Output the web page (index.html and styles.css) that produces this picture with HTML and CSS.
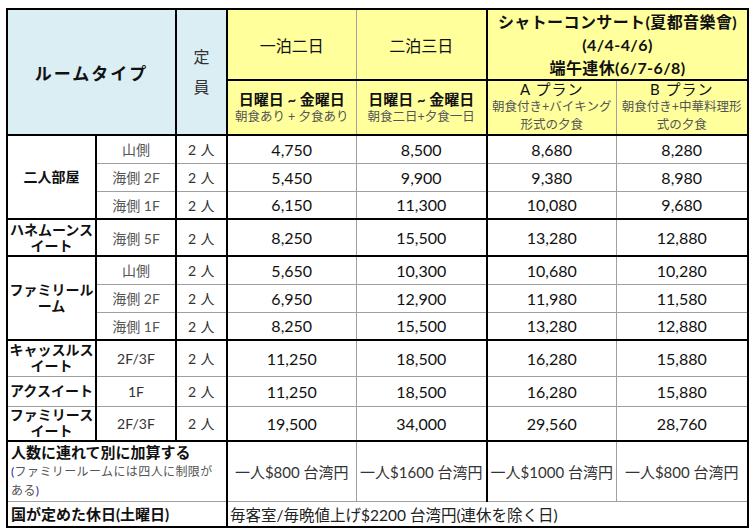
FILE: index.html
```html
<!DOCTYPE html>
<html lang="ja">
<head>
<meta charset="utf-8">
<title>Room rates</title>
<link rel="stylesheet" href="styles.css">
</head>
<body>
<div class="wrap">
<table class="rates">
  <colgroup>
    <col class="c1"><col class="c2"><col class="c3"><col class="c4"><col class="c5"><col class="c6"><col class="c7">
  </colgroup>
  <thead>
    <tr class="hr1">
      <th class="blue rt" rowspan="2" colspan="2">ルームタイプ</th>
      <th class="blue cap" rowspan="2">定<br>員</th>
      <th class="yel stay">一泊二日</th>
      <th class="yel stay">二泊三日</th>
      <th class="yel chateau" colspan="2">
        <div>シャトーコンサート(夏都音樂會)</div>
        <div>(4/4-4/6)</div>
        <div>端午連休(6/7-6/8)</div>
      </th>
    </tr>
    <tr class="hr2">
      <th class="yel sub-h">
        <div class="days">日曜日 ~ 金曜日</div>
        <div class="meal">朝食あり + 夕食あり</div>
      </th>
      <th class="yel sub-h">
        <div class="days">日曜日 ~ 金曜日</div>
        <div class="meal">朝食二日+夕食一日</div>
      </th>
      <th class="yel plan">
        <div class="pname">A プラン</div>
        <div class="pdesc">朝食付き+バイキング<br>形式の夕食</div>
      </th>
      <th class="yel plan">
        <div class="pname">B プラン</div>
        <div class="pdesc">朝食付き+中華料理形<br>式の夕食</div>
      </th>
    </tr>
  </thead>
  <tbody>
    <tr class="r28 g">
      <td class="name" rowspan="3">二人部屋</td>
      <td class="sub">山側</td><td class="pp">2 人</td>
      <td class="num">4,750</td><td class="num">8,500</td><td class="num">8,680</td><td class="num">8,280</td>
    </tr>
    <tr class="r28">
      <td class="sub">海側 2F</td><td class="pp">2 人</td>
      <td class="num">5,450</td><td class="num">9,900</td><td class="num">9,380</td><td class="num">8,980</td>
    </tr>
    <tr class="r28">
      <td class="sub">海側 1F</td><td class="pp">2 人</td>
      <td class="num">6,150</td><td class="num">11,300</td><td class="num">10,080</td><td class="num">9,680</td>
    </tr>
    <tr class="r37 g">
      <td class="name">ハネムーンス<br>イート</td>
      <td class="sub">海側 5F</td><td class="pp">2 人</td>
      <td class="num">8,250</td><td class="num">15,500</td><td class="num">13,280</td><td class="num">12,880</td>
    </tr>
    <tr class="r28 g">
      <td class="name" rowspan="3">ファミリール<br>ーム</td>
      <td class="sub">山側</td><td class="pp">2 人</td>
      <td class="num">5,650</td><td class="num">10,300</td><td class="num">10,680</td><td class="num">10,280</td>
    </tr>
    <tr class="r28">
      <td class="sub">海側 2F</td><td class="pp">2 人</td>
      <td class="num">6,950</td><td class="num">12,900</td><td class="num">11,980</td><td class="num">11,580</td>
    </tr>
    <tr class="r28">
      <td class="sub">海側 1F</td><td class="pp">2 人</td>
      <td class="num">8,250</td><td class="num">15,500</td><td class="num">13,280</td><td class="num">12,880</td>
    </tr>
    <tr class="r36 g">
      <td class="name">キャッスルス<br>イート</td>
      <td class="sub dark">2F/3F</td><td class="pp">2 人</td>
      <td class="num">11,250</td><td class="num">18,500</td><td class="num">16,280</td><td class="num">15,880</td>
    </tr>
    <tr class="r30 g1">
      <td class="name">アクスイート</td>
      <td class="sub dark">1F</td><td class="pp">2 人</td>
      <td class="num">11,250</td><td class="num">18,500</td><td class="num">16,280</td><td class="num">15,880</td>
    </tr>
    <tr class="r35 g1">
      <td class="name">ファミリース<br>イート</td>
      <td class="sub dark">2F/3F</td><td class="pp">2 人</td>
      <td class="num">19,500</td><td class="num">34,000</td><td class="num">29,560</td><td class="num">28,760</td>
    </tr>
    <tr class="r60 g">
      <td class="label" colspan="3">
        <div class="ltitle">人数に連れて別に加算する</div>
        <div class="lnote"><span class="paren">(</span>ファミリールームには四人に制限が<br>ある<span class="paren">)</span></div>
      </td>
      <td class="extra">一人$800 台湾円</td>
      <td class="extra">一人$1600 台湾円</td>
      <td class="extra">一人$1000 台湾円</td>
      <td class="extra">一人$800 台湾円</td>
    </tr>
    <tr class="r26 g1">
      <td class="label hol" colspan="3">国が定めた休日(土曜日)</td>
      <td class="holv" colspan="4">毎客室/毎晩値上げ$2200 台湾円(連休を除く日)</td>
    </tr>
  </tbody>
</table>
</div>
</body>
</html>
```

FILE: styles.css
```css
html, body {
  margin: 0;
  padding: 0;
  background: #ffffff;
}

body {
  font-family: "Lato", "Noto Sans CJK JP", sans-serif;
  color: #151515;
}

.wrap {
  padding: 8px 0 0 6px;
}

.rates {
  border-collapse: collapse;
  table-layout: fixed;
  width: 743px;
  border: 2px solid #000;
}

.rates th,
.rates td {
  border: 1px solid #a0a0a0;
  padding: 0;
  text-align: center;
  vertical-align: middle;
  white-space: nowrap;
  overflow: visible;
}

.c1 { width: 89px; border-right: 2px solid #000; }
.c2 { width: 80px; border-right: 2px solid #000; }
.c3 { width: 51px; border-right: 2px solid #000; }
.c4 { width: 129px; }
.c5 { width: 131px; border-right: 2px solid #000; }
.c6 { width: 129px; }
.c7 { width: 132px; }

/* header */
.hr1 { height: 70px; }
.hr2 { height: 53px; }

.rates thead th {
  border-bottom: 2px solid #000;
  font-weight: normal;
}

.blue { background: #dbeef4; }
.yel { background: #ffff9c; }

.rt {
  font-size: 17px;
  font-weight: bold !important;
  letter-spacing: 2px;
  color: #111;
}

.cap {
  font-size: 16px;
  line-height: 30px;
  color: #333;
}

.stay {
  font-size: 16px;
  color: #111;
  padding-top: 2px;
}

.chateau {
  font-size: 16px;
  font-weight: bold !important;
  line-height: 23px;
  color: #111;
  letter-spacing: 0.4px;
  padding-top: 3px;
}

.sub-h {
  padding-top: 2px;
}

.days {
  font-size: 15px;
  font-weight: bold;
  line-height: 18px;
  color: #111;
}

.meal {
  font-size: 12.5px;
  line-height: 18px;
  color: #555;
}

.plan {
  vertical-align: top !important;
}

.pname {
  font-size: 15px;
  line-height: 16px;
  color: #111;
  letter-spacing: 1px;
}

.pdesc {
  font-size: 12.5px;
  line-height: 18px;
  color: #555;
  margin-top: 1px;
}

/* body rows */
.r28 { height: 28px; }
.r37 { height: 37px; }
.r36 { height: 36px; }
.r30 { height: 30px; }
.r35 { height: 35px; }
.r60 { height: 60px; }
.r26 { height: 26px; }

.rates tr.g > td { border-top: 2px solid #000; }
.rates tr.g1 > td { border-top: 1px solid #000; }

.name {
  font-size: 14px;
  font-weight: bold;
  line-height: 16px;
  color: #111;
}

.sub {
  font-size: 14px;
  color: #555;
}

.sub.dark {
  color: #333;
}

.pp {
  font-size: 14px;
  color: #333;
  letter-spacing: 0.5px;
}

.num {
  font-size: 16px;
  color: #111;
}

.label {
  text-align: left !important;
  padding-left: 3px !important;
}

.ltitle {
  font-size: 15px;
  font-weight: bold;
  line-height: 19px;
  color: #111;
}

.lnote {
  font-size: 12px;
  line-height: 19px;
  color: #555;
  letter-spacing: 0.4px;
}

.paren {
  color: #1a1a9a;
}

.extra {
  font-size: 15px;
  color: #333;
}

.hol {
  font-size: 15px;
  font-weight: bold;
  color: #111;
}

.holv {
  text-align: left !important;
  padding-left: 2px !important;
  font-size: 15.5px;
  color: #222;
}
```
